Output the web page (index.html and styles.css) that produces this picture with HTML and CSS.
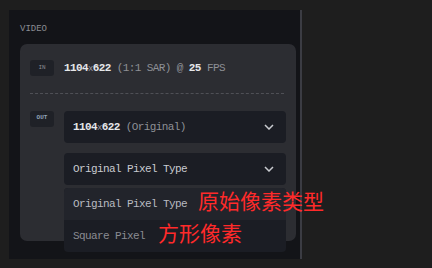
FILE: index.html
```html
<!DOCTYPE html>
<html>
<head>
<meta charset="utf-8">
<link rel="stylesheet" href="styles.css">
</head>
<body>
<div class="panel">
  <div class="title">VIDEO</div>
  <div class="card">
    <div class="row in-row">
      <span class="badge">IN</span>
      <span class="info"><b>1104</b><span class="x">x</span><b>622</b> (1:1 SAR) @ <b>25</b> FPS</span>
    </div>
    <div class="sep"></div>
    <div class="row out-row">
      <span class="badge out">OUT</span>
      <div class="selects">
        <div class="select">
          <span><b>1104</b><span class="x">x</span><b>622</b> <span class="dim">(Original)</span></span>
          <svg class="chev" width="10" height="6" viewBox="0 0 10 6"><path d="M1 1l4 4 4-4" fill="none" stroke="#c9cbd0" stroke-width="1.5"/></svg>
        </div>
        <div class="select open">
          <span class="val">Original Pixel Type</span>
          <svg class="chev" width="10" height="6" viewBox="0 0 10 6"><path d="M1 1l4 4 4-4" fill="none" stroke="#c9cbd0" stroke-width="1.5"/></svg>
          <div class="menu">
            <div class="opt active">Original Pixel Type</div>
            <div class="opt">Square Pixel</div>
          </div>
        </div>
      </div>
    </div>
  </div>
</div>
<div class="note note1">原始像素类型</div>
<div class="note note2">方形像素</div>
</body>
</html>
```
FILE: styles.css
```css
html, body {
  margin: 0;
  padding: 0;
  background: #1e1e1e;
  width: 432px;
  height: 268px;
  overflow: hidden;
}
body {
  font-family: "Liberation Mono", "DejaVu Sans Mono", monospace;
  font-size: 11px;
  letter-spacing: -0.6px;
  position: relative;
}
.panel {
  margin: 10px 0 0 9px;
  width: 280px;
  height: 249px;
  padding: 0 0 0 11px;
  background: #131418;
  border-right: 2px solid #3b3c43;
}
.title {
  padding-top: 14px;
  height: 20px;
  line-height: 10px;
  font-size: 9px;
  letter-spacing: 0;
  color: #8a8c93;
}
.card {
  width: 256px;
  height: 181px;
  padding: 16px 10px 0 10px;
  background: #2c2d32;
  border-radius: 7px;
  display: flex;
  flex-direction: column;
}
.row {
  display: flex;
  gap: 10px;
  align-items: flex-start;
}
.badge {
  flex: none;
  width: 24px;
  height: 16px;
  line-height: 16px;
  text-align: center;
  border-radius: 3px;
  background: #1f2127;
  color: #8a8c93;
  font-size: 6px;
  letter-spacing: 0;
}
.badge.out {
  color: #8fa3b8;
  font-weight: bold;
  line-height: 14px;
}
.info {
  line-height: 16px;
  color: #8e9096;
}
b {
  color: #e6e7ea;
  font-weight: bold;
}
.x {
  font-size: 9px;
  color: #9a9ca3;
}
.sep {
  margin: 16px 2px 0 0;
  border-top: 1px dashed #4f5056;
  height: 0;
}
.out-row {
  margin-top: 17px;
}
.selects {
  display: flex;
  flex-direction: column;
  gap: 10px;
  width: 222px;
}
.select {
  position: relative;
  height: 32px;
  padding: 0 12px 0 9px;
  background: #1b1d24;
  border-radius: 4px;
  display: flex;
  align-items: center;
  justify-content: space-between;
  color: #c9cbd0;
}
.dim {
  color: #8e9096;
}
.chev {
  display: block;
}
.menu {
  position: absolute;
  left: 0;
  top: 35px;
  width: 222px;
  background: #1b1d24;
  border-radius: 4px;
  overflow: hidden;
  z-index: 2;
}
.opt {
  height: 32px;
  line-height: 32px;
  padding-left: 9px;
  color: #8a8c92;
}
.opt.active {
  background: #22242b;
  color: #b9bbc1;
}
.note {
  position: absolute;
  font-family: "Noto Sans CJK SC", sans-serif;
  font-size: 21px;
  line-height: 24px;
  letter-spacing: 0;
  color: #ff2a2a;
  z-index: 5;
}
.note1 {
  left: 198px;
  top: 188px;
}
.note2 {
  left: 158px;
  top: 220px;
}
```
